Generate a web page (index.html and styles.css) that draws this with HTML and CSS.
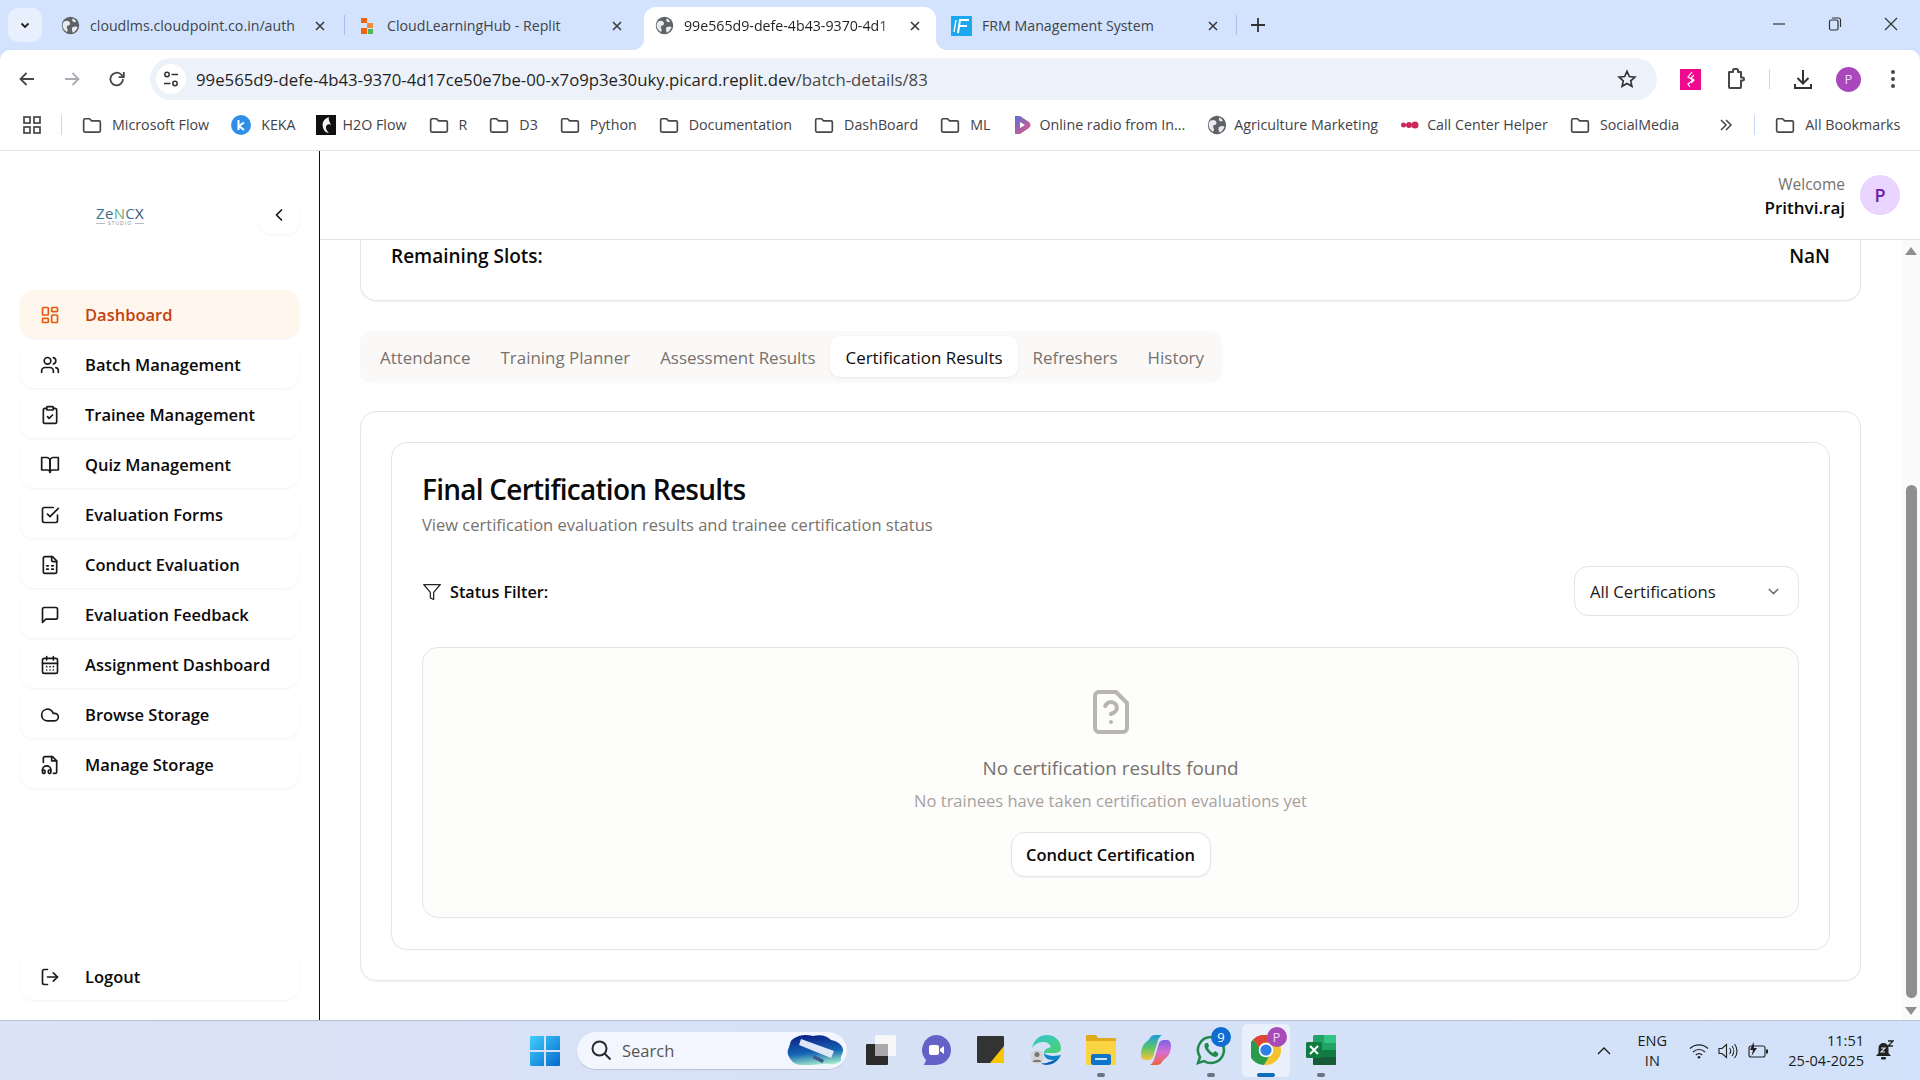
FILE: index.html
```html
<!DOCTYPE html>
<html>
<head>
    <title>Batch Details</title>
    <link rel="stylesheet" href="styles.css">
</head>
<body>
<svg class="defs" width="0" height="0">
    <symbol id="folder" viewBox="0 0 24 24"><path d="M3.5 4.5h5.6l2.4 2.6h9a1.5 1.5 0 0 1 1.5 1.5v10.4a1.5 1.5 0 0 1-1.5 1.5h-17A1.5 1.5 0 0 1 2 19V6a1.5 1.5 0 0 1 1.5-1.5z" fill="none" stroke="#474747" stroke-width="2"/></symbol>
    <symbol id="globe" viewBox="0 0 24 24"><circle cx="12" cy="12" r="11" fill="#5f6368"/><path d="M4 7c3-2 6-1 7 1s0 4-2 4-2 2-1 4 0 4-1 4c-3-2-5-5-5-8 0-2 1-4 2-5zM15 3c2 1 3 2 4 4-1 1-3 1-4 0s-1-3 0-4zM15 14c2-1 5-1 6 0-1 3-3 6-6 7-1-2-2-6 0-7z" fill="#e8eaed"/></symbol>
    <symbol id="close" viewBox="0 0 12 12"><path d="M2 2l8 8M10 2l-8 8" stroke="#3b3b3b" stroke-width="1.6" fill="none"/></symbol>
</svg>

<div class="tabstrip">
    <div class="tab-search"><svg width="12" height="12" viewBox="0 0 12 12"><path d="M2.5 4.5 6 8l3.5-3.5" fill="none" stroke="#1f1f1f" stroke-width="1.8"/></svg></div>
    <div class="tab tab-1">
        <svg class="favicon"><use href="#globe"/></svg>
        <span class="tab-title">cloudlms.cloudpoint.co.in/auth</span>
        <svg class="tab-close"><use href="#close"/></svg>
    </div>
    <div class="tab-sep"></div>
    <div class="tab tab-2">
        <svg class="favicon-sm" viewBox="0 0 13 20"><rect x="0" y="2" width="6" height="5" fill="#f26207"/><rect x="6" y="7" width="6" height="5" fill="#f58a3c"/><rect x="0" y="12" width="6" height="6" fill="#f26207"/><rect x="7" y="13" width="5" height="5" fill="#4fb45a"/></svg>
        <span class="tab-title">CloudLearningHub - Replit</span>
        <svg class="tab-close"><use href="#close"/></svg>
    </div>
    <div class="tab tab-3 active">
        <svg class="favicon"><use href="#globe"/></svg>
        <span class="tab-title fade">99e565d9-defe-4b43-9370-4d1</span>
        <svg class="tab-close"><use href="#close"/></svg>
    </div>
    <div class="tab tab-4">
        <svg class="favicon-lg" viewBox="0 0 21 20"><rect width="21" height="20" rx="1" fill="#1ba8ee"/><path d="M7 17 9 4h9M8 10h8" stroke="#fff" stroke-width="2" fill="none"/><path d="M3 16 5 4" stroke="#fff" stroke-width="1.4"/></svg>
        <span class="tab-title">FRM Management System</span>
        <svg class="tab-close"><use href="#close"/></svg>
    </div>
    <div class="tab-sep"></div>
    <svg class="new-tab" width="14" height="14" viewBox="0 0 14 14"><path d="M7 0v14M0 7h14" stroke="#333" stroke-width="1.8"/></svg>
    <div class="win-controls">
        <svg width="14" height="14" viewBox="0 0 14 14"><path d="M1 7h12" stroke="#333" stroke-width="1.2"/></svg>
        <svg width="14" height="14" viewBox="0 0 14 14"><rect x="1.5" y="3" width="8.5" height="10" rx="1.5" fill="none" stroke="#333" stroke-width="1.2"/><path d="M4 1h6.500A2 2 0 0 1 12.500 3v7" fill="none" stroke="#333" stroke-width="1.2"/></svg>
        <svg width="14" height="14" viewBox="0 0 14 14"><path d="M1 1l12 12M13 1 1 13" stroke="#333" stroke-width="1.2"/></svg>
    </div>
</div>

<div class="toolbar">
    <svg class="tool" viewBox="0 0 20 20"><path d="M17 10H4M9.500 4 3.500 10l6 6" fill="none" stroke="#474747" stroke-width="1.8"/></svg>
    <svg class="tool" viewBox="0 0 20 20"><path d="M3 10h13M10.500 4l6 6-6 6" fill="none" stroke="#a9acb0" stroke-width="1.8"/></svg>
    <svg class="tool" viewBox="0 0 20 20"><path d="M16 10a6.300 6.300 0 1 1-2-4.600L16.200 7.500" fill="none" stroke="#474747" stroke-width="1.8"/><path d="M16.800 3v5.200h-5.200" fill="none" stroke="#474747" stroke-width="1.8"/></svg>
    <div class="addressbar">
        <span class="site-chip"><svg width="18" height="18" viewBox="0 0 18 18"><circle cx="5" cy="4.500" r="2.200" fill="none" stroke="#333" stroke-width="1.5"/><path d="M9.500 4.500H16M2 13.500h6.500" stroke="#333" stroke-width="1.5"/><circle cx="13" cy="13.500" r="2.200" fill="none" stroke="#333" stroke-width="1.5"/></svg></span>
        <span class="url">99e565d9-defe-4b43-9370-4d17ce50e7be-00-x7o9p3e30uky.picard.replit.dev<span class="url-path">/batch-details/83</span></span>
        <svg class="star" width="20" height="20" viewBox="0 0 24 24"><path d="M12 2.800l2.800 6.200 6.700.7-5 4.500 1.400 6.600L12 17.400l-5.900 3.400 1.400-6.600-5-4.500 6.700-.7z" fill="none" stroke="#333" stroke-width="2"/></svg>
    </div>
    <svg class="ext-pink" width="21" height="21" viewBox="0 0 21 21"><rect width="21" height="21" fill="#ee0a8c"/><path d="M12 3 8 8l5 3-5 4 2 3M14 6l-3 3 3 2-3 3" fill="none" stroke="#fff" stroke-width="1.2"/></svg>
    <svg class="ext-puzzle" width="22" height="24" viewBox="0 0 22 24"><path d="M4 5h4V3.500a1.500 1.500 0 0 1 1.500-1.500h2A1.500 1.500 0 0 1 13 3.500V5h3v5.500h1.500a1.500 1.500 0 0 1 0 3H16V20a1 1 0 0 1-1 1H5a1 1 0 0 1-1-1z" fill="none" stroke="#474747" stroke-width="2" stroke-linejoin="round"/></svg>
    <div class="tool-sep"></div>
    <svg class="download" width="24" height="24" viewBox="0 0 24 24"><path d="M12 3v13M6.500 11l5.500 5.500 5.500-5.500" fill="none" stroke="#333" stroke-width="2"/><path d="M4 17v4h16v-4" fill="none" stroke="#333" stroke-width="2"/></svg>
    <div class="profile">P</div>
    <svg class="dots" width="6" height="20" viewBox="0 0 6 20"><circle cx="3" cy="3" r="2" fill="#474747"/><circle cx="3" cy="10" r="2" fill="#474747"/><circle cx="3" cy="17" r="2" fill="#474747"/></svg>
</div>

<div class="bookmarks">
    <svg class="apps" width="18" height="18" viewBox="0 0 18 18"><g fill="none" stroke="#474747" stroke-width="1.7"><rect x="1" y="1" width="6" height="6"/><rect x="11" y="1" width="6" height="6"/><rect x="1" y="11" width="6" height="6"/><rect x="11" y="11" width="6" height="6"/></g></svg>
    <div class="bm-sep"></div>
    <div class="bm"><svg class="bm-icon"><use href="#folder"/></svg>Microsoft Flow</div>
    <div class="bm bm-keka"><svg class="bm-icon" viewBox="0 0 20 20"><circle cx="10" cy="10" r="10" fill="#2f8fe8"/><path d="M7.500 5v10M13 7.500 8 11l5 4" fill="none" stroke="#fff" stroke-width="2"/></svg>KEKA</div>
    <div class="bm bm-tight"><svg class="bm-icon" viewBox="0 0 20 20"><rect width="20" height="20" fill="#111"/><path d="M13 2C7 4 5 9 8 15c1 2 3 3 5 3-3-3-4-6-2-8 1-1 3-1 4 0-1-3-3-5-2-8z" fill="#f2f2f2"/></svg>H2O Flow</div>
    <div class="bm"><svg class="bm-icon"><use href="#folder"/></svg>R</div>
    <div class="bm"><svg class="bm-icon"><use href="#folder"/></svg>D3</div>
    <div class="bm"><svg class="bm-icon"><use href="#folder"/></svg>Python</div>
    <div class="bm"><svg class="bm-icon"><use href="#folder"/></svg>Documentation</div>
    <div class="bm"><svg class="bm-icon"><use href="#folder"/></svg>DashBoard</div>
    <div class="bm"><svg class="bm-icon"><use href="#folder"/></svg>ML</div>
    <div class="bm bm-tight"><svg class="bm-icon" viewBox="0 0 20 20"><defs><linearGradient id="radio" x1="0" y1="0" x2="1" y2="1"><stop offset="0" stop-color="#5a6fd8"/><stop offset="1" stop-color="#f0557a"/></linearGradient></defs><path d="M3 1h5l9 6c2 2 2 4 0 6l-9 6H3z" fill="url(#radio)"/><path d="M8 7l5 3-5 3z" fill="#fff"/></svg>Online radio from In...</div>
    <div class="bm bm-tight"><svg class="bm-icon" viewBox="0 0 24 24"><use href="#globe"/></svg>Agriculture Marketing</div>
    <div class="bm bm-tight"><svg class="bm-icon" viewBox="0 0 20 20"><circle cx="3.500" cy="10" r="2.500" fill="#c9285a"/><circle cx="9" cy="10" r="3" fill="#c9285a"/><circle cx="15" cy="10" r="3.500" fill="#c9285a"/></svg>Call Center Helper</div>
    <div class="bm"><svg class="bm-icon"><use href="#folder"/></svg>SocialMedia</div>
    <svg class="bm-more" width="14" height="14" viewBox="0 0 14 14"><path d="M2 2l5 5-5 5M7 2l5 5-5 5" fill="none" stroke="#474747" stroke-width="1.5"/></svg>
    <div class="bm-sep bm-sep-2"></div>
    <div class="bm"><svg class="bm-icon"><use href="#folder"/></svg>All Bookmarks</div>
</div>

<div class="app">
    <aside class="sidebar">
        <div class="brand">
            <div class="logo">
                <div class="logo-word"><span class="c1">Z</span><span class="c2">e</span><span class="c3">N</span><span class="c4">C</span><span class="c5">X</span></div>
                <div class="logo-sub">STUDIO</div>
            </div>
            <button class="collapse"><svg width="20" height="20" viewBox="0 0 24 24"><path d="m15 18-6-6 6-6"/></svg></button>
        </div>
        <nav class="nav">
            <a class="nav-item active"><svg viewBox="0 0 24 24"><rect x="3" y="3" width="7" height="9" rx="1"/><rect x="14" y="3" width="7" height="5" rx="1"/><rect x="14" y="12" width="7" height="9" rx="1"/><rect x="3" y="16" width="7" height="5" rx="1"/></svg>Dashboard</a>
            <a class="nav-item"><svg viewBox="0 0 24 24"><path d="M16 21v-2a4 4 0 0 0-4-4H6a4 4 0 0 0-4 4v2"/><circle cx="9" cy="7" r="4"/><path d="M22 21v-2a4 4 0 0 0-3-3.870"/><path d="M16 3.130a4 4 0 0 1 0 7.750"/></svg>Batch Management</a>
            <a class="nav-item"><svg viewBox="0 0 24 24"><rect x="8" y="2" width="8" height="4" rx="1"/><path d="M16 4h2a2 2 0 0 1 2 2v14a2 2 0 0 1-2 2H6a2 2 0 0 1-2-2V6a2 2 0 0 1 2-2h2"/><path d="m9 14 2 2 4-4"/></svg>Trainee Management</a>
            <a class="nav-item"><svg viewBox="0 0 24 24"><path d="M2 3h6a4 4 0 0 1 4 4v14a3 3 0 0 0-3-3H2z"/><path d="M22 3h-6a4 4 0 0 0-4 4v14a3 3 0 0 1 3-3h7z"/></svg>Quiz Management</a>
            <a class="nav-item"><svg viewBox="0 0 24 24"><path d="m9 11 3 3L22 4"/><path d="M21 12v7a2 2 0 0 1-2 2H5a2 2 0 0 1-2-2V5a2 2 0 0 1 2-2h11"/></svg>Evaluation Forms</a>
            <a class="nav-item"><svg viewBox="0 0 24 24"><path d="M15 2H6a2 2 0 0 0-2 2v16a2 2 0 0 0 2 2h12a2 2 0 0 0 2-2V7Z"/><path d="M14 2v4a2 2 0 0 0 2 2h4"/><path d="M8 13h2"/><path d="M14 13h2"/><path d="M8 17h2"/><path d="M14 17h2"/></svg>Conduct Evaluation</a>
            <a class="nav-item"><svg viewBox="0 0 24 24"><path d="M21 15a2 2 0 0 1-2 2H7l-4 4V5a2 2 0 0 1 2-2h14a2 2 0 0 1 2 2z"/></svg>Evaluation Feedback</a>
            <a class="nav-item"><svg viewBox="0 0 24 24"><path d="M8 2v4"/><path d="M16 2v4"/><rect x="3" y="4" width="18" height="18" rx="2"/><path d="M3 10h18"/><path d="M8 14h.01"/><path d="M12 14h.01"/><path d="M16 14h.01"/><path d="M8 18h.01"/><path d="M12 18h.01"/><path d="M16 18h.01"/></svg>Assignment Dashboard</a>
            <a class="nav-item"><svg viewBox="0 0 24 24"><path d="M17.500 19H9a7 7 0 1 1 6.710-9h1.790a4.500 4.500 0 1 1 0 9Z"/></svg>Browse Storage</a>
            <a class="nav-item"><svg viewBox="0 0 24 24"><path d="M4 9V4a2 2 0 0 1 2-2h9l5 5v13a2 2 0 0 1-2 2h-2"/><path d="M14 2v5h6"/><path d="M3 19v-1a5 5 0 0 1 10 0v1"/><path d="M3 18h2a1 1 0 0 1 1 1v2a1 1 0 0 1-1 1H4a1 1 0 0 1-1-1z"/><path d="M13 18h-2a1 1 0 0 0-1 1v2a1 1 0 0 0 1 1h1a1 1 0 0 0 1-1z"/></svg>Manage Storage</a>
        </nav>
        <a class="nav-item logout"><svg viewBox="0 0 24 24"><path d="M9 21H5a2 2 0 0 1-2-2V5a2 2 0 0 1 2-2h4"/><path d="m16 17 5-5-5-5"/><path d="M21 12H9"/></svg>Logout</a>
    </aside>

    <main class="main">
        <header class="topbar">
            <div class="user">
                <span class="welcome">Welcome</span>
                <span class="username">Prithvi.raj</span>
            </div>
            <div class="avatar">P</div>
        </header>
        <div class="scroll-row">
            <div class="content">
                <div class="card summary">
                    <span>Remaining Slots:</span>
                    <span>NaN</span>
                </div>
                <div class="tabs">
                    <div class="tabs-item">Attendance</div>
                    <div class="tabs-item">Training Planner</div>
                    <div class="tabs-item">Assessment Results</div>
                    <div class="tabs-item current">Certification Results</div>
                    <div class="tabs-item">Refreshers</div>
                    <div class="tabs-item">History</div>
                </div>
                <div class="card outer">
                    <div class="inner">
                        <h1>Final Certification Results</h1>
                        <p class="desc">View certification evaluation results and trainee certification status</p>
                        <div class="filter-row">
                            <div class="filter-label">
                                <svg width="20" height="20" viewBox="0 0 24 24"><path d="M22 3H2l8 9.460V19l4 2v-8.540L22 3z"/></svg>
                                Status Filter:
                            </div>
                            <div class="select">
                                All Certifications
                                <svg width="17" height="17" viewBox="0 0 24 24"><path d="m6 9 6 6 6-6"/></svg>
                            </div>
                        </div>
                        <div class="empty">
                            <svg class="empty-icon" width="48" height="48" viewBox="0 0 24 24"><path d="M14.500 2H6a2 2 0 0 0-2 2v16a2 2 0 0 0 2 2h12a2 2 0 0 0 2-2V7.500L14.500 2z"/><path d="M9.100 9a3 3 0 0 1 5.820 1c0 2-3 3-3 3"/><path d="M12 17h.01"/></svg>
                            <div class="empty-title">No certification results found</div>
                            <div class="empty-sub">No trainees have taken certification evaluations yet</div>
                            <button class="btn">Conduct Certification</button>
                        </div>
                    </div>
                </div>
            </div>
            <div class="scrollbar">
                <div class="arrow-up"></div>
                <div class="thumb"></div>
                <div class="arrow-down"></div>
            </div>
        </div>
    </main>
</div>

<div class="taskbar">
    <svg class="win" width="30" height="30" viewBox="0 0 30 30"><defs><linearGradient id="winb" x1="0" y1="0" x2="1" y2="1"><stop offset="0" stop-color="#3fd0fb"/><stop offset="1" stop-color="#0669cf"/></linearGradient></defs><path d="M1 0h13v14H0V1a1 1 0 0 1 1-1zM16 0h13a1 1 0 0 1 1 1v13H16zM0 16h14v14H1a1 1 0 0 1-1-1zM16 16h14v13a1 1 0 0 1-1 1H16z" fill="url(#winb)"/></svg>
    <div class="search">
        <svg width="22" height="22" viewBox="0 0 22 22"><circle cx="9.500" cy="9.500" r="7" fill="none" stroke="#2b2b2b" stroke-width="2"/><path d="m14.500 14.500 6 6" stroke="#2b2b2b" stroke-width="2"/></svg>
        <span class="search-text">Search</span>
        <svg class="search-art" width="58" height="32" viewBox="0 0 58 32"><defs><linearGradient id="sky" x1="0.300" y1="0" x2="0.500" y2="1"><stop offset="0" stop-color="#0c1f86"/><stop offset=".6" stop-color="#1667b5"/><stop offset="1" stop-color="#9fe9c9"/></linearGradient></defs><path d="M6 5c6-4 12-5 20-3 8-2 14 0 18 4 6 1 12 5 12 10s-3 6-2 9-6 6-12 5-10 1-18 1S8 32 4 26 0 18 2 13 3 7 6 5z" fill="url(#sky)"/><path d="M14 5 47 17l-3 7L12 11z" fill="#dfe6f7"/><path d="M27 21l10 5-1.500 3-10-5z" fill="#3a5a8c"/></svg>
    </div>
    <div class="task-icons">
        <div class="task"><svg width="30" height="30" viewBox="0 0 30 30"><rect x="9" y="0" width="21" height="21" rx="1" fill="#f7f7f8"/><rect x="0" y="9" width="22" height="21" rx="1" fill="#2b2b2b"/><rect x="9" y="9" width="13" height="12" fill="#a9a9ad"/></svg></div>
        <div class="task"><svg width="30" height="30" viewBox="0 0 30 30"><path d="M15 0a15 15 0 0 1 0 30H3l2-5A15 15 0 0 1 15 0z" fill="#6461c9"/><rect x="8" y="10" width="10" height="10" rx="2" fill="#fff"/><path d="m19 14 4-3v8l-4-3z" fill="#fff"/></svg></div>
        <div class="task"><svg width="27" height="27" viewBox="0 0 27 27"><rect width="27" height="27" rx="1" fill="#333"/><path d="M27 10v17H13z" fill="#f7c600"/></svg></div>
        <div class="task"><svg width="30" height="30" viewBox="0 0 30 30"><defs><linearGradient id="edge" x1="0" y1="0" x2="1" y2="1"><stop offset="0" stop-color="#2ec6d8"/><stop offset="1" stop-color="#4fd06a"/></linearGradient></defs><path d="M1 13C3 4 9 0 16 0c8 0 14 6 14 13 0 4-3 5-7 5H13c0-4 4-5 7-6-1-3-4-5-8-5-5 0-9 3-11 6z" fill="url(#edge)"/><path d="M30 20c-3 6-8 10-15 10-2 0-4-1-5-2 2 1 11 0 20-8z" fill="#0b62b5"/><path d="M13 18c0 4 3 7 8 7 4 0 7-2 9-5-4 1-13 2-17-2z" fill="#0f85c9"/><circle cx="6" cy="22" r="7" fill="#d4d4d6"/><circle cx="6" cy="19.500" r="2.500" fill="#777"/><path d="M1.500 27c1-3 8-3 9 0z" fill="#777"/></svg></div>
        <div class="task has-dot"><svg width="30" height="30" viewBox="0 0 30 30"><path d="M0 1a1 1 0 0 1 1-1h9l2 3h17a1 1 0 0 1 1 1v5H0z" fill="#e0a91e"/><path d="M0 6h30v23a1 1 0 0 1-1 1H1a1 1 0 0 1-1-1z" fill="#fbd444"/><rect x="5" y="19" width="20" height="11" rx="2" fill="#0d74c7"/><rect x="9" y="23" width="12" height="2" fill="#c9e6fa"/></svg></div>
        <div class="task"><svg width="30" height="30" viewBox="0 0 30 30"><defs><linearGradient id="cop1" x1="0" y1="0" x2="0" y2="1"><stop offset="0" stop-color="#1f9be0"/><stop offset=".5" stop-color="#5bc36a"/><stop offset="1" stop-color="#f5c73b"/></linearGradient><linearGradient id="cop2" x1="0" y1="0" x2="0" y2="1"><stop offset="0" stop-color="#7b63e6"/><stop offset=".5" stop-color="#d86fd1"/><stop offset="1" stop-color="#f2623a"/></linearGradient></defs><path d="M9 3c1-2 3-3 5-3h7c-2 1-3 3-4 5l-5 17c-1 2-3 3-5 3H4c-3 0-4-3-4-6 0-5 2-9 4-11 2-2 4-3 5-5z" fill="url(#cop1)"/><path d="M21 27c-1 2-3 3-5 3H9c2-1 3-3 4-5l5-17c1-2 3-3 5-3h3c3 0 4 3 4 6 0 5-2 9-4 11-2 2-4 3-5 5z" fill="url(#cop2)"/></svg></div>
        <div class="task has-dot"><svg width="30" height="30" viewBox="0 0 30 30"><path d="M15 2a13 13 0 0 0-11 20L2 28l6-2A13 13 0 1 0 15 2z" fill="none" stroke="#1f8a4c" stroke-width="2.5"/><path d="M10 8c-2 1-2 4 0 7s5 6 9 7c2 0 4-2 3-4l-3-2-2 2c-2-1-4-3-5-5l1-2-1-3z" fill="#1f8a4c"/></svg><span class="badge blue">9</span></div>
        <div class="task running"><svg width="30" height="30" viewBox="0 0 30 30"><circle cx="15" cy="15" r="15" fill="#f4c22c"/><path d="M15 0a15 15 0 0 1 13 7.500H15a7.500 7.500 0 0 0-7 5L2 4.500A15 15 0 0 1 15 0z" fill="#dd4537"/><path d="M2.100 4.500A15 15 0 0 0 13 30l6.500-11.300A7.500 7.500 0 0 1 8 12.500z" fill="#2a9a4b"/><circle cx="15" cy="15" r="7.300" fill="#fff"/><circle cx="15" cy="15" r="5.600" fill="#2f7ee6"/></svg><span class="badge purple">P</span><span class="run-bar"></span></div>
        <div class="task has-dot"><svg width="30" height="30" viewBox="0 0 30 30"><rect x="7" y="0" width="23" height="30" rx="1.5" fill="#21a366"/><rect x="18" y="0" width="12" height="8" fill="#33c481"/><rect x="7" y="15" width="23" height="8" fill="#107c41"/><rect x="7" y="22" width="23" height="8" rx="1" fill="#185c37"/><rect x="0" y="7" width="16" height="16" rx="1.5" fill="#107c41"/><path d="m4 11 8 8M12 11l-8 8" stroke="#fff" stroke-width="2"/></svg></div>
    </div>
    <div class="tray">
        <svg class="caret" width="14" height="8" viewBox="0 0 14 8"><path d="M1 7l6-6 6 6" fill="none" stroke="#1c1c1c" stroke-width="1.3"/></svg>
        <div class="lang">ENG<br>IN</div>
        <svg class="wifi" width="20" height="16" viewBox="0 0 20 16"><path d="M1 5.500a13 13 0 0 1 18 0M4 9a8.500 8.500 0 0 1 12 0M6.800 12a4.500 4.500 0 0 1 6.400 0" fill="none" stroke="#222" stroke-width="1.2"/><circle cx="10" cy="14.300" r="1.300" fill="#222"/></svg>
        <svg class="speaker" width="20" height="18" viewBox="0 0 20 18"><path d="M1 6.500h3L8.500 2.500v13L4 11.500H1z" fill="none" stroke="#222" stroke-width="1.1"/><path d="M11.500 6a4.500 4.500 0 0 1 0 6M14 4a8 8 0 0 1 0 10M16.500 2a11 11 0 0 1 0 14" fill="none" stroke="#222" stroke-width="1.1"/></svg>
        <svg class="battery" width="21" height="18" viewBox="0 0 21 18"><rect x="1" y="4" width="16" height="11" rx="2" fill="none" stroke="#222" stroke-width="1.1"/><rect x="18" y="7.500" width="2" height="4" fill="#222"/><path d="M5.500 0 2 8h3l-1.500 6L9 6H6z" fill="#222"/></svg>
        <div class="clock"><div>11:51</div><div>25-04-2025</div></div>
        <svg class="bell" width="18" height="21" viewBox="0 0 18 21"><path d="M7.500 3a5 5 0 0 0-5 5v5L0 16h15l-2.500-3V8a5 5 0 0 0-5-5z" fill="#222"/><rect x="5" y="17" width="5" height="2.500" rx="1" fill="#222"/><path d="M5 8h4l-4 4h4" stroke="#d3e2f9" stroke-width="1.1" fill="none"/><path d="M12 1h5l-5 5h5" stroke="#222" stroke-width="1.3" fill="none"/></svg>
    </div>
</div>
</body>
</html>
```

FILE: styles.css
```css
* {
    box-sizing: border-box;
}
html, body {
    height: 100%;
}
body {
    margin: 0;
    width: 1920px;
    height: 1080px;
    overflow: hidden;
    display: flex;
    flex-direction: column;
    font-family: "Open Sans", "Noto Sans", sans-serif;
    background-color: #d3e3fd;
    color: #0a0a0a;
}
.defs {
    position: absolute;
}

/* browser tabs */
.tabstrip {
    height: 50px;
    display: flex;
    align-items: flex-end;
    font-size: 14.2px;
    color: #3f4348;
    flex: none;
}
.tab-search {
    width: 34px;
    height: 34px;
    margin: 0 0 8px 8px;
    border-radius: 10px;
    background-color: #e9f0fd;
    display: flex;
    justify-content: center;
    align-items: center;
}
.tab {
    height: 43px;
    display: flex;
    align-items: center;
}
.tab-1 {
    width: 302px;
    padding: 0 18px 6px 19px;
}
.tab-2 {
    width: 299px;
    padding: 0 21px 6px 16px;
}
.tab-3 {
    width: 292px;
    padding: 0 15px 6px 11px;
}
.tab-4 {
    width: 300px;
    padding: 0 17px 6px 15px;
}
.tab.active {
    background-color: #fff;
    border-radius: 12px 12px 0 0;
    position: relative;
    color: #1f1f1f;
}
.tab.active::before,
.tab.active::after {
    content: "";
    position: absolute;
    bottom: 0;
    width: 12px;
    height: 12px;
}
.tab.active::before {
    left: -12px;
    background: radial-gradient(circle at 0 0, transparent 12px, #fff 12.5px);
}
.tab.active::after {
    right: -12px;
    background: radial-gradient(circle at 100% 0, transparent 12px, #fff 12.5px);
}
.favicon {
    width: 19px;
    height: 19px;
    margin-right: 10px;
    flex: none;
}
.favicon-sm {
    width: 13px;
    height: 20px;
    margin-right: 13px;
    flex: none;
}
.favicon-lg {
    width: 21px;
    height: 20px;
    margin-right: 10px;
    flex: none;
}
.tab-title {
    flex: 1;
    white-space: nowrap;
}
.fade {
    -webkit-mask-image: linear-gradient(to right, #000 90%, transparent 100%);
    mask-image: linear-gradient(to right, #000 90%, transparent 100%);
}
.tab-close {
    width: 12px;
    height: 12px;
    flex: none;
    margin-left: 8px;
}
.tab-sep {
    width: 1px;
    height: 20px;
    background-color: #a8c0e8;
    margin-bottom: 15px;
    flex: none;
}
.new-tab {
    margin: 0 0 18px 14px;
}
.win-controls {
    margin-left: auto;
    margin-bottom: 19px;
    display: flex;
    gap: 42px;
    padding-right: 22px;
}

/* toolbar */
.toolbar {
    height: 50px;
    flex: none;
    background-color: #fff;
    border-radius: 10px 10px 0 0;
    display: flex;
    align-items: center;
    padding: 8px 0 0 17px;
}
.tool {
    width: 20px;
    height: 20px;
    margin-right: 25px;
    flex: none;
}
.addressbar {
    width: 1507px;
    height: 42px;
    margin-left: -2px;
    border-radius: 21px;
    background-color: #edf2fa;
    display: flex;
    align-items: center;
    padding-left: 6px;
    flex: none;
}
.site-chip {
    width: 30px;
    height: 30px;
    border-radius: 50%;
    background-color: #fff;
    display: flex;
    align-items: center;
    justify-content: center;
    flex: none;
}
.url {
    margin-left: 10px;
    font-size: 16.75px;
    color: #1f1f1f;
    white-space: nowrap;
}
.url-path {
    color: #474747;
}
.star {
    margin-left: auto;
    margin-right: 20px;
}
.ext-pink {
    margin-left: 23px;
}
.ext-puzzle {
    margin-left: 24px;
}
.tool-sep {
    width: 1px;
    height: 20px;
    background-color: #c7d8f2;
    margin-left: 22px;
}
.download {
    margin-left: 21px;
}
.profile {
    width: 25px;
    height: 25px;
    margin-left: 21px;
    border-radius: 50%;
    background-color: #ab47bc;
    color: #f3d9f7;
    font-size: 13px;
    display: flex;
    align-items: center;
    justify-content: center;
}
.dots {
    margin-left: 29px;
}

/* bookmarks */
.bookmarks {
    height: 51px;
    flex: none;
    background-color: #fff;
    border-bottom: 1px solid #e3e3e3;
    display: flex;
    align-items: center;
    padding: 0 0 1px 23px;
    font-size: 14.25px;
    color: #3f4348;
    white-space: nowrap;
}
.apps {
    flex: none;
}
.bm-sep {
    width: 1px;
    height: 20px;
    background-color: #c7d8f2;
    margin: 0 20px 0 20px;
    flex: none;
}
.bm {
    display: flex;
    align-items: center;
    gap: 10px;
    margin-right: 22px;
    flex: none;
}
.bm-keka {
    margin-right: 20px;
}
.bm-tight {
    gap: 7px;
}
.bm-icon {
    width: 20px;
    height: 20px;
    flex: none;
}
.bm-more {
    margin-left: 18px;
    flex: none;
}
.bm-sep-2 {
    margin-left: 21px;
}

/* app */
.app {
    flex: 1;
    display: flex;
    min-height: 0;
    background-color: #fff;
}
.sidebar {
    width: 320px;
    flex: none;
    border-right: 1px solid #111;
    display: flex;
    flex-direction: column;
    padding: 44px 20px 20px 20px;
}
.brand {
    display: flex;
    align-items: center;
    height: 39px;
}
.logo {
    margin-left: 76px;
    width: 48px;
    padding-top: 4px;
    text-align: center;
}
.logo-word {
    font-size: 15px;
    line-height: 13px;
    letter-spacing: 0.3px;
    white-space: nowrap;
}
.c1 { color: #2f7b96; }
.c2 { color: #41698a; }
.c3 { color: #62ad84; }
.c4 { color: #437898; }
.c5 { color: #2b4a68; }
.logo-sub {
    display: flex;
    align-items: center;
    gap: 3px;
    font-size: 5px;
    line-height: 7px;
    letter-spacing: 1px;
    color: #7d8a94;
}
.logo-sub::before,
.logo-sub::after {
    content: "";
    flex: 1;
    height: 1px;
    background-color: #b5bcc2;
}
.collapse {
    margin-left: auto;
    width: 40px;
    height: 39px;
    border: none;
    border-radius: 12px;
    background-color: #fff;
    box-shadow: 0 1px 3px rgba(0, 0, 0, 0.05);
    display: flex;
    align-items: center;
    justify-content: center;
    padding: 0;
}
.collapse svg {
    fill: none;
    stroke: #111;
    stroke-width: 2;
    stroke-linecap: round;
    stroke-linejoin: round;
}
.nav {
    margin-top: 56px;
    display: flex;
    flex-direction: column;
    gap: 2px;
}
.nav-item {
    height: 48px;
    flex: none;
    border-radius: 14px;
    display: flex;
    align-items: center;
    gap: 25px;
    padding: 1px 0 0 20px;
    font-size: 16.5px;
    font-weight: 600;
    color: #0c0a09;
    background-color: #fff;
    box-shadow: 0 1px 3px rgba(0, 0, 0, 0.05);
}
.nav-item svg {
    width: 20px;
    height: 20px;
    flex: none;
    fill: none;
    stroke: #1c1917;
    stroke-width: 2;
    stroke-linecap: round;
    stroke-linejoin: round;
}
.nav-item.active {
    background-color: #fff7ed;
    color: #c2410c;
}
.nav-item.active svg {
    stroke: #ea580c;
}
.logout {
    margin-top: auto;
}

/* main */
.main {
    flex: 1;
    min-width: 0;
    display: flex;
    flex-direction: column;
}
.topbar {
    height: 89px;
    flex: none;
    border-bottom: 1px solid #e5e5e5;
    display: flex;
    align-items: center;
    justify-content: flex-end;
    gap: 15px;
    padding-right: 20px;
}
.user {
    display: flex;
    flex-direction: column;
    align-items: flex-end;
    padding-top: 3px;
}
.welcome {
    font-size: 15.5px;
    line-height: 22px;
    color: #78716c;
}
.username {
    margin-top: 1px;
    font-size: 17px;
    line-height: 24px;
    font-weight: 600;
}
.avatar {
    width: 40px;
    height: 40px;
    border-radius: 50%;
    background-color: #e9d5ff;
    color: #6b21a8;
    font-size: 18px;
    font-weight: 600;
    display: flex;
    align-items: center;
    justify-content: center;
}
.scroll-row {
    flex: 1;
    display: flex;
    min-height: 0;
}
.content {
    flex: 1;
    min-width: 0;
    padding: 0 41px 0 40px;
    overflow: hidden;
}
.card {
    background-color: #fff;
    border: 1px solid #e7e5e4;
    border-radius: 16px;
    box-shadow: 0 1px 2px rgba(0, 0, 0, 0.04);
}
.summary {
    height: 61px;
    border-top: none;
    border-radius: 0 0 16px 16px;
    display: flex;
    justify-content: space-between;
    padding: 3px 30px 0 30px;
    font-size: 19px;
    line-height: 26px;
    font-weight: 600;
}
.tabs {
    margin-top: 30px;
    height: 51px;
    width: 862px;
    padding: 5px;
    border-radius: 12px;
    background-color: #faf9f8;
    box-shadow: 0 1px 2px rgba(0, 0, 0, 0.03);
    display: flex;
}
.tabs-item {
    height: 41px;
    padding: 1px 15px 0;
    border-radius: 10px;
    display: flex;
    align-items: center;
    font-size: 16.95px;
    font-weight: 500;
    color: #78716c;
    white-space: nowrap;
}
.tabs-item.current {
    background-color: #fff;
    color: #0c0a09;
    box-shadow: 0 1px 3px rgba(0, 0, 0, 0.08);
}
.outer {
    margin-top: 29px;
    padding: 30px;
}
.inner {
    border: 1px solid #e7e5e4;
    border-radius: 16px;
    padding: 28px 30px 31px 30px;
    box-shadow: 0 1px 2px rgba(0, 0, 0, 0.03);
}
h1 {
    margin: 0;
    font-size: 28px;
    line-height: 36px;
    font-weight: 600;
    letter-spacing: -0.75px;
}
.desc {
    margin: 6px 0 0;
    font-size: 16.5px;
    line-height: 24px;
    color: #78716c;
}
.filter-row {
    margin-top: 29px;
    height: 50px;
    display: flex;
    align-items: center;
    justify-content: space-between;
}
.filter-label {
    display: flex;
    align-items: center;
    gap: 8px;
    padding-top: 1px;
    font-size: 16.2px;
    font-weight: 600;
}
.filter-label svg {
    fill: none;
    stroke: #292524;
    stroke-width: 1.5;
    stroke-linejoin: round;
}
.select {
    width: 225px;
    height: 50px;
    border: 1px solid #e7e5e4;
    border-radius: 14px;
    padding: 0 16px 0 15px;
    display: flex;
    align-items: center;
    justify-content: space-between;
    font-size: 16.7px;
    color: #1c1917;
}
.select svg {
    fill: none;
    stroke: #78716c;
    stroke-width: 2;
    stroke-linecap: round;
    stroke-linejoin: round;
}
.empty {
    margin-top: 31px;
    height: 271px;
    border: 1px solid #e7e5e4;
    border-radius: 16px;
    background-color: #fdfdfc;
    display: flex;
    flex-direction: column;
    align-items: center;
    padding-top: 40px;
}
.empty-icon {
    fill: none;
    stroke: #b9b5b2;
    stroke-width: 2;
    stroke-linecap: round;
    stroke-linejoin: round;
}
.empty-title {
    margin-top: 18px;
    font-size: 18.9px;
    line-height: 28px;
    color: #78716c;
}
.empty-sub {
    margin-top: 7px;
    font-size: 16.5px;
    line-height: 24px;
    color: #a8a29e;
}
.btn {
    margin-top: 19px;
    width: 200px;
    height: 45px;
    border: 1px solid #e7e5e4;
    border-radius: 14px;
    background-color: #fff;
    box-shadow: 0 1px 2px rgba(0, 0, 0, 0.05);
    font-family: inherit;
    font-size: 16.5px;
    font-weight: 600;
    color: #0c0a09;
    padding: 0;
}
.scrollbar {
    width: 18px;
    flex: none;
    background-color: #fafafa;
    display: flex;
    flex-direction: column;
    align-items: center;
    padding: 7px 0 5px;
}
.arrow-up {
    width: 0;
    height: 0;
    border: 6px solid transparent;
    border-top: none;
    border-bottom: 8px solid #8f8f8f;
}
.thumb {
    width: 11px;
    height: 513px;
    margin-top: 230px;
    border-radius: 6px;
    background-color: #8f8f8f;
}
.arrow-down {
    width: 0;
    height: 0;
    margin-top: auto;
    border: 6px solid transparent;
    border-bottom: none;
    border-top: 8px solid #8f8f8f;
}

/* windows taskbar */
.taskbar {
    height: 60px;
    flex: none;
    border-top: 1px solid #b6c0d6;
    background: linear-gradient(to right, #dae2f5, #d7e1f6 50%, #d2e2fa);
    display: flex;
    align-items: center;
    padding-left: 530px;
}
.win {
    flex: none;
}
.search {
    width: 270px;
    height: 38px;
    margin-left: 17px;
    border-radius: 19px;
    background-color: #f3f6fe;
    border-bottom: 1px solid #b9c2d8;
    display: flex;
    align-items: center;
    padding-left: 13px;
}
.search-text {
    margin-left: 10px;
    font-size: 16.5px;
    color: #555;
}
.search-art {
    margin-left: auto;
    margin-right: 2px;
}
.task-icons {
    display: flex;
    margin-left: 6px;
}
.task {
    width: 55px;
    height: 53px;
    display: flex;
    align-items: center;
    justify-content: center;
    position: relative;
    padding-bottom: 2px;
}
.task.has-dot::after {
    content: "";
    position: absolute;
    bottom: 0;
    width: 8px;
    height: 4px;
    border-radius: 2px;
    background-color: #6d7380;
}
.task.running {
    background-color: #e9f0fb;
    border-radius: 5px;
    width: 48px;
    margin: 0 3.5px;
}
.run-bar {
    position: absolute;
    bottom: 0;
    width: 18px;
    height: 4px;
    border-radius: 2px;
    background-color: #0f6cbd;
}
.badge {
    position: absolute;
    top: 3px;
    right: 2px;
    width: 20px;
    height: 20px;
    border-radius: 50%;
    color: #fff;
    font-size: 13px;
    display: flex;
    align-items: center;
    justify-content: center;
}
.badge.blue {
    right: 7px;
    background-color: #0f6cd1;
}
.badge.purple {
    right: 3px;
    background-color: #a749b8;
    color: #f0d6f5;
}
.tray {
    margin-left: auto;
    display: flex;
    align-items: center;
    color: #1b1b1b;
    font-size: 14.5px;
    padding-right: 26px;
}
.lang {
    width: 48px;
    margin-left: 17px;
    text-align: center;
    line-height: 20px;
}
.caret {
    flex: none;
}
.wifi {
    margin-left: 13px;
}
.speaker {
    margin-left: 9px;
}
.battery {
    margin-left: 10px;
}
.clock {
    margin-left: 19px;
    text-align: right;
    line-height: 20px;
}
.bell {
    margin-left: 12px;
}
```
